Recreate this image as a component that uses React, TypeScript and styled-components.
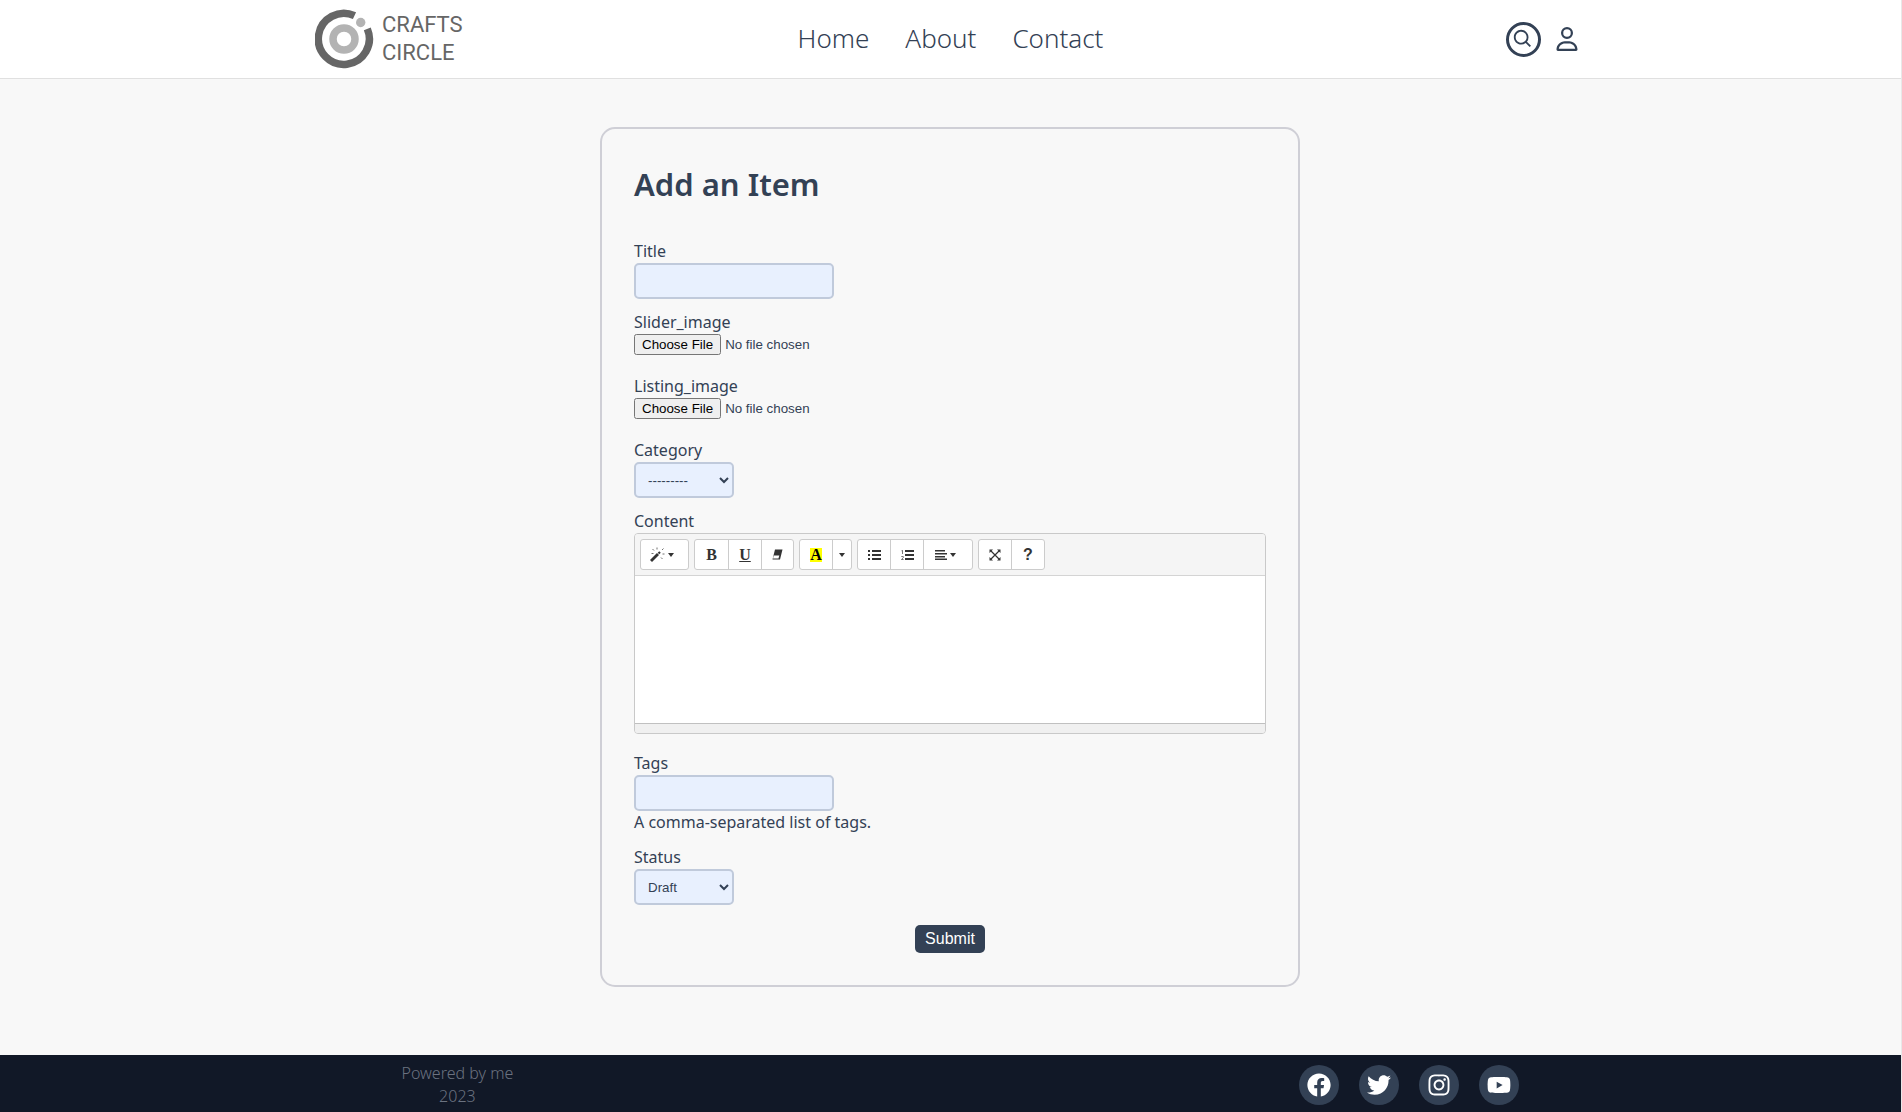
import React from "react";
import styled, { createGlobalStyle } from "styled-components";
import { FaFacebook, FaInstagram, FaTwitter, FaYoutube } from "react-icons/fa";
import { FaRegUser } from "react-icons/fa6";
import { BiSearch } from "react-icons/bi";

const GlobalStyle = createGlobalStyle`
  *, *::before, *::after { box-sizing: border-box; }
  body {
    margin: 0;
    background: #f8f8f8;
    color: #334155;
    font-family: "Noto Sans", "Noto Sans CJK JP", sans-serif;
    font-size: 16px;
    font-weight: 300;
    line-height: 23px;
  }
  a { color: inherit; text-decoration: none; }
`;

const Page = styled.div`
  display: flex;
  flex-direction: column;
  min-height: 100vh;
  border-right: 1px solid #e8e8e8;
`;

const Header = styled.header`
  background: #fff;
  border-bottom: 1px solid #e0e0e0;
`;

const HeaderInner = styled.div`
  display: grid;
  grid-template-columns: 1fr auto 1fr;
  align-items: center;
  max-width: 1272px;
  height: 78px;
  margin: 0 auto;
`;

const LogoLink = styled.a`
  display: flex;
  justify-self: start;
`;

const Nav = styled.nav`
  display: flex;
  gap: 36px;
  padding-bottom: 2px;
  font-size: 26px;
  line-height: 40px;
`;

const Actions = styled.div`
  display: flex;
  align-items: center;
  justify-self: end;
  gap: 14px;
  padding-right: 8px;
`;

const IconButton = styled.button<{ $ring?: boolean }>`
  display: flex;
  align-items: center;
  justify-content: center;
  height: 35px;
  width: ${(p) => (p.$ring ? "35px" : "auto")};
  padding: 0;
  border: ${(p) => (p.$ring ? "3px solid #334155" : "0")};
  border-radius: ${(p) => (p.$ring ? "50%" : "0")};
  background: none;
  color: #334155;
`;

const Main = styled.main`
  flex: 1;
  padding: 48px 17px 68px 16px;
`;

const Card = styled.form`
  display: flex;
  flex-direction: column;
  gap: 12px;
  max-width: 700px;
  margin: 0 auto;
  padding: 32px;
  border: 2px solid #cfcfd6;
  border-radius: 15px;
`;

const Heading = styled.h1`
  margin: 0 0 21px;
  font-size: 31px;
  font-weight: 600;
  line-height: 46px;
`;

const Field = styled.div<{ $after?: number }>`
  display: flex;
  flex-direction: column;
  align-items: flex-start;
  padding-bottom: ${(p) => p.$after ?? 0}px;
  font-weight: 400;
`;

const controlFont = `
  font-family: "Liberation Sans", Arial, sans-serif;
`;

const TextInput = styled.input`
  ${controlFont}
  width: 200px;
  height: 36px;
  padding: 0 10px;
  border: 2px solid #c0cadb;
  border-radius: 5px;
  background: #e8f0fe;
  color: #334155;
`;

const Select = styled.select`
  ${controlFont}
  width: 100px;
  height: 36px;
  padding: 0 8px;
  border: 2px solid #c0cadb;
  border-radius: 5px;
  background: #e8f0fe;
  color: #334155;
`;

const FileInput = styled.input`
  ${controlFont}
  height: 21px;
  color: #334155;
`;

const Submit = styled.button`
  align-self: center;
  height: 28px;
  margin-top: 8px;
  padding: 0 10px;
  border: 0;
  border-radius: 5px;
  background: #334155;
  color: #fff;
  font-family: "Liberation Sans", Arial, sans-serif;
  font-size: 16px;
`;

const Editor = styled.div`
  align-self: stretch;
  overflow: hidden;
  border: 1px solid #c9c9c9;
  border-radius: 4px;
`;

const Toolbar = styled.div`
  display: flex;
  flex-wrap: wrap;
  gap: 5px;
  padding: 5px;
  border-bottom: 1px solid #d4d4d4;
  background: #f5f5f5;
`;

const ToolGroup = styled.div`
  display: flex;
  border: 1px solid #ccc;
  border-radius: 3px;
  background: #fff;
`;

const Tool = styled.button<{ $w?: number; $menu?: boolean }>`
  display: flex;
  align-items: center;
  justify-content: center;
  gap: 3px;
  width: ${(p) => p.$w ?? 33}px;
  height: 29px;
  padding: 0 ${(p) => (p.$menu ? 5 : 0)}px 0 0;
  border: 0;
  background: none;
  color: #333;
  font-family: "Liberation Serif", "Times New Roman", serif;
  font-size: 16px;
  font-weight: 700;
  line-height: 14px;
  & + & { border-left: 1px solid #ccc; }
`;

const Underlined = styled.span`
  text-decoration: underline;
  text-decoration-thickness: 1px;
`;

const Marked = styled.span`
  width: 12px;
  background: #ff0;
  color: #000;
`;

const Question = styled.span`
  font-family: "Liberation Sans", Arial, sans-serif;
`;

const EditArea = styled.div`
  height: 147px;
  background: #fff;
`;

const StatusBar = styled.div`
  height: 10px;
  border-top: 1px solid #c0c0c0;
  background: #f0f0f0;
`;

const Footer = styled.footer`
  background: #111827;
  color: #6b7280;
`;

const FooterInner = styled.div`
  display: flex;
  align-items: center;
  justify-content: space-between;
  max-width: 1280px;
  height: 58px;
  margin: 0 auto;
  padding: 2px 72px 0 91px;
`;

const Credit = styled.p`
  margin: 0;
  text-align: center;
`;

const Socials = styled.div`
  display: flex;
  gap: 20px;
`;

const Social = styled.a`
  display: flex;
  align-items: center;
  justify-content: center;
  width: 40px;
  height: 40px;
  border-radius: 50%;
  background: #334155;
  color: #fff;
`;

const LogoText = styled.text`
  font-family: Roboto, "Liberation Sans", sans-serif;
  font-size: 22px;
  font-weight: 400;
  fill: #666;
`;

const Logo = () => (
  <svg width="152" height="64" viewBox="0 0 152 64" role="img" aria-label="Crafts Circle">
    <path d="M39.5 8.700A25.5 25.5 0 1 0 52.300 21.900" fill="none" stroke="#666" strokeWidth="7.500" />
    <circle cx="29" cy="32" r="11" fill="none" stroke="#b3b3b3" strokeWidth="7.500" />
    <circle cx="45.700" cy="15.500" r="4.700" fill="#b3b3b3" />
    <LogoText x="67" y="25">CRAFTS</LogoText>
    <LogoText x="67" y="53">CIRCLE</LogoText>
  </svg>
);

const Caret = () => (
  <svg width="6" height="4" viewBox="0 0 6 4" aria-hidden="true">
    <path d="M0 0h6L3 4z" fill="#333" />
  </svg>
);

const Wand = () => (
  <svg width="15" height="15" viewBox="0 0 15 15" fill="none" stroke="#333" aria-hidden="true">
    <path d="M1 14L8 7" strokeWidth="2.800" />
    <path d="M8.500 6.500L10 5" strokeWidth="2.200" />
    <path d="M7 .5v2M2.500 2l1.500 1.500M1.500 6.500h2M12 3l1.500-1.500M12.500 7h2M11 10.500l1.500 1.500" strokeWidth="1" opacity=".7" />
  </svg>
);

const Eraser = () => (
  <svg width="11" height="11" viewBox="0 0 11 11" aria-hidden="true">
    <path d="M3 .5h7.500L8 10.500H.5z" fill="#333" />
    <path d="M1.700 6.500h5.600l-.8 3H1z" fill="#fff" />
  </svg>
);

const Bullets = () => (
  <svg width="13" height="10" viewBox="0 0 13 10" fill="#333" aria-hidden="true">
    <path d="M0 0h2v2H0zM0 4h2v2H0zM0 8h2v2H0zM4 0h9v2H4zM4 4h9v2H4zM4 8h9v2H4z" />
  </svg>
);

const Numbers = () => (
  <svg width="13" height="10" viewBox="0 0 13 10" fill="#333" aria-hidden="true">
    <path d="M4 0h9v2H4zM4 4h9v2H4zM4 8h9v2H4z" />
    <path d="M.5 .8L1.500 .2V4M.3 6.500h2v1.200L.4 9.500h2.200" fill="none" stroke="#666" strokeWidth=".9" />
  </svg>
);

const Align = () => (
  <svg width="12" height="10" viewBox="0 0 12 10" fill="#333" aria-hidden="true">
    <path d="M0 0h10v1.400H0zM0 3h12v1.400H0zM0 6h10v1.400H0zM0 8.600h12V10H0z" />
  </svg>
);

const Expand = () => (
  <svg width="12" height="12" viewBox="0 0 12 12" fill="#333" aria-hidden="true">
    <path d="M2 2l8 8M10 2l-8 8" stroke="#333" strokeWidth="1.200" />
    <path d="M.5.5h3.500l-3.500 3.500zM11.500.5v3.500L8 .5zM.5 11.500V8L4 11.500zM11.500 11.500H8L11.500 8z" />
  </svg>
);

export default function App() {
  return (
    <Page>
      <GlobalStyle />
      <Header>
        <HeaderInner>
          <LogoLink href="#"><Logo /></LogoLink>
          <Nav>
            <a href="#home">Home</a>
            <a href="#about">About</a>
            <a href="#contact">Contact</a>
          </Nav>
          <Actions>
            <IconButton $ring aria-label="Search"><BiSearch size={22} /></IconButton>
            <IconButton aria-label="Account"><FaRegUser size={24} /></IconButton>
          </Actions>
        </HeaderInner>
      </Header>

      <Main>
        <Card onSubmit={(e) => e.preventDefault()}>
          <Heading>Add an Item</Heading>
          <Field>
            <label htmlFor="title">Title</label>
            <TextInput id="title" type="text" />
          </Field>
          <Field $after={8}>
            <label htmlFor="slider">Slider_image</label>
            <FileInput id="slider" type="file" />
          </Field>
          <Field $after={8}>
            <label htmlFor="listing">Listing_image</label>
            <FileInput id="listing" type="file" />
          </Field>
          <Field>
            <label htmlFor="category">Category</label>
            <Select id="category"><option>---------</option></Select>
          </Field>
          <Field $after={6}>
            <label id="content-label">Content</label>
            <Editor>
              <Toolbar>
                <ToolGroup>
                  <Tool type="button" $w={47} $menu aria-label="Style"><Wand /><Caret /></Tool>
                </ToolGroup>
                <ToolGroup>
                  <Tool type="button">B</Tool>
                  <Tool type="button"><Underlined>U</Underlined></Tool>
                  <Tool type="button" $w={32} aria-label="Clear formatting"><Eraser /></Tool>
                </ToolGroup>
                <ToolGroup>
                  <Tool type="button" $w={32}><Marked>A</Marked></Tool>
                  <Tool type="button" $w={19} aria-label="More colors"><Caret /></Tool>
                </ToolGroup>
                <ToolGroup>
                  <Tool type="button" $w={32} aria-label="Bulleted list"><Bullets /></Tool>
                  <Tool type="button" aria-label="Numbered list"><Numbers /></Tool>
                  <Tool type="button" $w={49} $menu aria-label="Paragraph"><Align /><Caret /></Tool>
                </ToolGroup>
                <ToolGroup>
                  <Tool type="button" $w={32} aria-label="Full screen"><Expand /></Tool>
                  <Tool type="button"><Question>?</Question></Tool>
                </ToolGroup>
              </Toolbar>
              <EditArea contentEditable role="textbox" aria-labelledby="content-label" />
              <StatusBar />
            </Editor>
          </Field>
          <Field>
            <label htmlFor="tags">Tags</label>
            <TextInput id="tags" type="text" aria-describedby="tags-help" />
            <span id="tags-help">A comma-separated list of tags.</span>
          </Field>
          <Field>
            <label htmlFor="status">Status</label>
            <Select id="status"><option>Draft</option></Select>
          </Field>
          <Submit type="submit">Submit</Submit>
        </Card>
      </Main>

      <Footer>
        <FooterInner>
          <Credit>Powered by me<br />2023</Credit>
          <Socials>
            <Social href="#facebook" aria-label="Facebook"><FaFacebook size={24} /></Social>
            <Social href="#twitter" aria-label="Twitter"><FaTwitter size={24} /></Social>
            <Social href="#instagram" aria-label="Instagram"><FaInstagram size={24} /></Social>
            <Social href="#youtube" aria-label="YouTube"><FaYoutube size={24} /></Social>
          </Socials>
        </FooterInner>
      </Footer>
    </Page>
  );
}
